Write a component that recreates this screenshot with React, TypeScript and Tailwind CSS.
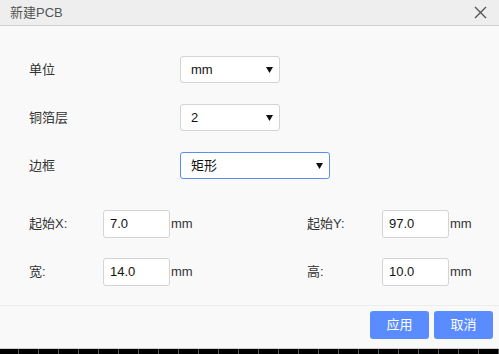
import React from "react";

const font = { fontFamily: '"Liberation Sans", "Noto Sans CJK SC", sans-serif' };

const Arrow = () => (
	<svg width="7" height="6" viewBox="0 0 7 6" className="shrink-0">
		<path d="M0 0 L7 0 L3.5 6 Z" fill="#111" />
	</svg>
);

const Select = ({ value, wide, focused }: { value: string; wide?: boolean; focused?: boolean }) => (
	<div
		className={`flex items-center justify-between h-[27px] rounded-[3px] bg-white pl-[10px] pr-[6px] text-[13px] text-[#111] border ${
			wide ? "w-[150px]" : "w-[100px]"
		} ${focused ? "border-[#5b8def]" : "border-[#d4d4d4]"}`}>
		<span>{value}</span>
		<Arrow />
	</div>
);

const NumField = ({ label, value, labelWidth }: { label: string; value: string; labelWidth: string }) => (
	<div className="flex items-center">
		<span className={`${labelWidth} text-[13px] text-[#333]`}>{label}</span>
		<div className="flex items-center w-[67px] h-[28px] rounded-[3px] border border-[#d4d4d4] bg-white pl-[6px] text-[13px] text-[#111]">
			{value}
		</div>
		<span className="ml-[1px] text-[13px] text-[#333]">mm</span>
	</div>
);

const App = () => {
	const ticks = Array.from({ length: 25 });

	return (
		<div className="w-[499px] h-[354px] flex flex-col bg-[#f9f9f9] overflow-hidden" style={font}>
			{/* title bar */}
			<div className="h-[26px] shrink-0 flex items-center justify-between bg-[#eeeeee] border-b border-[#cfcfcf] pl-[10px] pr-[12px]">
				<span className="text-[13px] text-[#555]">新建PCB</span>
				<svg width="13" height="13" viewBox="0 0 13 13">
					<path d="M1 1 L12 12 M12 1 L1 12" stroke="#555" strokeWidth="1.4" />
				</svg>
			</div>

			{/* body */}
			<div className="flex-1 flex flex-col pt-[30px] pl-[29px]">
				<div className="flex items-center">
					<span className="w-[151px] text-[13px] text-[#333]">单位</span>
					<Select value="mm" />
				</div>
				<div className="flex items-center mt-[21px]">
					<span className="w-[151px] text-[13px] text-[#333]">铜箔层</span>
					<Select value="2" />
				</div>
				<div className="flex items-center mt-[21px]">
					<span className="w-[151px] text-[13px] text-[#333]">边框</span>
					<Select value="矩形" wide focused />
				</div>

				<div className="flex mt-[31px]">
					<div className="w-[278px]">
						<NumField label="起始X:" value="7.0" labelWidth="w-[74px]" />
					</div>
					<NumField label="起始Y:" value="97.0" labelWidth="w-[75px]" />
				</div>
				<div className="flex mt-[20px]">
					<div className="w-[278px]">
						<NumField label="宽:" value="14.0" labelWidth="w-[74px]" />
					</div>
					<NumField label="高:" value="10.0" labelWidth="w-[75px]" />
				</div>
			</div>

			{/* footer */}
			<div className="h-[43px] shrink-0 flex items-start justify-end gap-[5px] border-t border-[#ececec] pt-[5px] pr-[6px]">
				<button className="w-[59px] h-[28px] rounded-[3px] bg-[#5b8cff] text-white text-[13px]">应用</button>
				<button className="w-[59px] h-[28px] rounded-[3px] bg-[#5b8cff] text-white text-[13px]">取消</button>
			</div>

			{/* ruler strip below dialog */}
			<div className="h-[6px] shrink-0 flex bg-black border-t border-[#d0d0d0]">
				<div className="w-[18px] shrink-0" />
				{ticks.map((_, i) => (
					<div key={i} className="w-[20px] shrink-0 border-l border-[#555]" />
				))}
			</div>
		</div>
	);
};

export default App;
